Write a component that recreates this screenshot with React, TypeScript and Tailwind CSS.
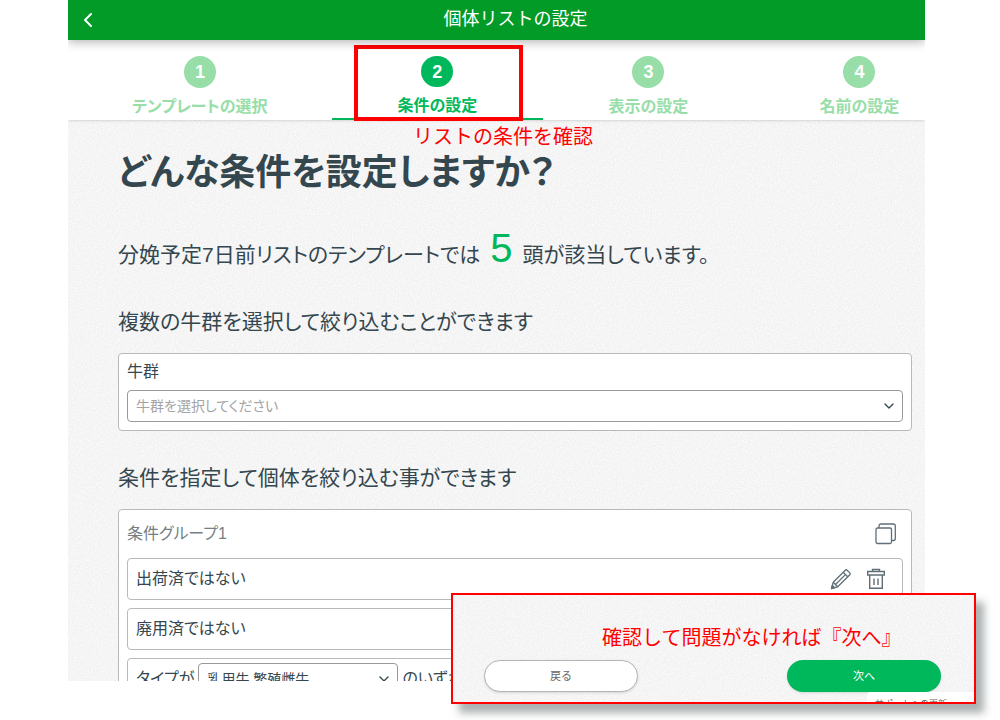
import { ChevronDown, ChevronLeft } from "lucide-react";

const STEPS = [
  { id: 1, label: "テンプレートの選択" },
  { id: 2, label: "条件の設定" },
  { id: 3, label: "表示の設定" },
  { id: 4, label: "名前の設定" },
];

const CURRENT_STEP = 2;

function PaperTexture() {
  return (
    <svg aria-hidden="true" className="absolute inset-0 h-full w-full">
      <filter id="paper">
        <feTurbulence type="fractalNoise" baseFrequency="0.7" numOctaves="2" seed="3" />
        <feColorMatrix values="0 0 0 0 1  0 0 0 0 1  0 0 0 0 1  1.8 0 0 0 -0.7" />
      </filter>
      <rect width="100%" height="100%" filter="url(#paper)" />
    </svg>
  );
}

function CopyIcon() {
  return (
    <svg width="22" height="22" viewBox="0 0 22 22" fill="none" stroke="#5f6f77" strokeWidth="1.3">
      <rect x="1" y="5" width="15.5" height="15.5" rx="1.5" />
      <path d="M4 5V3C4 1.800 4.800 1 6 1H18.300C19.500 1 20.300 1.800 20.300 3V15.500C20.300 16.700 19.500 17.500 18.300 17.500H16.500" />
    </svg>
  );
}

function PencilIcon() {
  return (
    <svg width="22" height="22" viewBox="0 0 22 22" fill="none" stroke="#5f6f77" strokeWidth="1.3" strokeLinejoin="round">
      <path d="M1.500 20.500L3.200 14.300L15.300 2.200C15.900 1.600 16.500 1.600 17.100 2.200L19.800 4.900C20.400 5.500 20.400 6.100 19.800 6.700L7.700 18.800Z" />
      <path d="M13.200 4.300L17.700 8.800M3.200 14.300L7.700 18.800M5.500 16.500L15.400 6.600" />
      <path d="M1.500 20.500L2.300 17.500L4.500 19.700Z" fill="#5f6f77" />
    </svg>
  );
}

function TrashIcon() {
  return (
    <svg width="20" height="22" viewBox="0 0 20 22" fill="none" stroke="#5f6f77" strokeWidth="1.4">
      <path d="M6.500 3.500V1.500H13.500V3.500" />
      <path d="M1.700 3.500H18.300V7H1.700Z" />
      <path d="M3.700 7V20.300H16.300V7M8 10.500V17M12 10.500V17" />
    </svg>
  );
}

function Stepper() {
  return (
    <nav aria-label="設定の手順" className="relative shrink-0 overflow-hidden bg-white shadow-sm">
      <ol className="-mr-10 grid grid-cols-[5fr_4fr_4fr_4fr]">
        {STEPS.map(({ id, label }) => {
          const active = id === CURRENT_STEP;
          return (
            <li
              key={id}
              aria-current={active ? "step" : undefined}
              className={
                active
                  ? "flex h-20 flex-col items-center border-b-2 border-[#00b85c] pt-4 text-[#00b85c]"
                  : "flex h-20 flex-col items-center pt-4 text-[#97dea8]"
              }
            >
              <span
                className={
                  active
                    ? "flex size-8 items-center justify-center rounded-full bg-[#00b85c] text-lg font-bold text-white"
                    : "flex size-8 items-center justify-center rounded-full bg-[#97dea8] text-lg font-bold text-white"
                }
              >
                {id}
              </span>
              <span className="mt-[7px] text-base font-bold">{label}</span>
            </li>
          );
        })}
      </ol>
    </nav>
  );
}

function HerdFilter() {
  return (
    <section className="mt-[15px] rounded border border-[#b9b9b9] bg-white px-2 pt-1.5 pb-2">
      <label htmlFor="herd" className="block text-base leading-6">
        牛群
      </label>
      <div className="relative mt-1.5">
        <select
          id="herd"
          defaultValue=""
          className="block h-8 w-full appearance-none rounded border border-[#999] bg-white px-2 text-sm text-[#a3a3a3]"
        >
          <option value="">牛群を選択してください</option>
        </select>
        <ChevronDown className="pointer-events-none absolute top-2 right-1.5 size-4" />
      </div>
    </section>
  );
}

function ConditionGroup() {
  return (
    <section className="mt-[15px] rounded border border-[#b9b9b9] bg-white px-2 pb-2">
      <div className="flex h-12 items-center justify-between pr-1.5">
        <h3 className="text-base text-[#757f84]">条件グループ1</h3>
        <button type="button" aria-label="条件グループを複製">
          <CopyIcon />
        </button>
      </div>
      <div className="flex flex-col gap-2">
        <div className="flex h-[42px] items-center justify-between rounded border border-[#b9b9b9] pr-4 pl-2">
          <p className="text-base">出荷済ではない</p>
          <div className="flex gap-3.5">
            <button type="button" aria-label="条件を編集">
              <PencilIcon />
            </button>
            <button type="button" aria-label="条件を削除">
              <TrashIcon />
            </button>
          </div>
        </div>
        <div className="flex h-[42px] items-center rounded border border-[#b9b9b9] px-2">
          <p className="text-base">廃用済ではない</p>
        </div>
        <div className="flex h-[42px] items-center gap-1 rounded border border-[#b9b9b9] px-2">
          <label htmlFor="cattle-type" className="text-base">
            タイプが
          </label>
          <div className="relative w-[200px]">
            <select
              id="cattle-type"
              className="block h-8 w-full appearance-none rounded border border-[#999] bg-white px-2 text-sm"
            >
              <option>乳用牛 繁殖雌牛</option>
            </select>
            <ChevronDown className="pointer-events-none absolute top-2 right-1.5 size-4" />
          </div>
          <span className="text-base">のいずれか</span>
        </div>
      </div>
    </section>
  );
}

function FooterCallout() {
  return (
    <aside className="absolute right-6 bottom-4 h-[111px] w-[525px] border-2 border-[#f00] bg-[#f2f2f2] shadow-[8px_9px_8px_rgba(70,80,80,0.45)]">
      <div className="relative h-full overflow-hidden">
        <PaperTexture />
        <div className="relative pt-[29px] pr-[33px] pl-[31px]">
          <p className="pl-[118px] text-xl leading-7 text-[#f00]">確認して問題がなければ『次へ』</p>
          <div className="mt-2 flex justify-between">
            <button
              type="button"
              className="h-8 w-[154px] rounded-full border border-[#b5b5b5] bg-white text-[11px] text-[#666] shadow"
            >
              戻る
            </button>
            <button type="button" className="h-8 w-[154px] rounded-full bg-[#00b85c] text-[11px] text-white shadow">
              次へ
            </button>
          </div>
        </div>
        <div className="absolute right-0 bottom-0 h-2.5 w-[107px] overflow-hidden rounded-tl-sm bg-white pt-1.5 pl-2 text-[9px] text-[#666]">
          サポートへの更新
        </div>
      </div>
    </aside>
  );
}

export default function App() {
  return (
    <div
      lang="ja"
      className="relative h-screen min-h-[600px] overflow-hidden bg-white pr-[75px] pb-[39px] pl-[68px] font-['Liberation_Sans','Noto_Sans_CJK_JP',sans-serif] text-[#34474f]"
    >
      <div className="relative flex h-full flex-col overflow-hidden bg-[#f2f2f2]">
        <PaperTexture />
        <header className="relative z-10 flex h-10 shrink-0 items-center bg-[#039b28] px-2 text-white shadow-[0_2px_10px_rgba(0,0,0,0.3)]">
          <button type="button" aria-label="戻る">
            <ChevronLeft className="size-6" />
          </button>
          <h1 className="flex-1 pb-0.5 pl-3.5 text-center text-lg leading-6">個体リストの設定</h1>
        </header>
        <div className="flex min-h-0 flex-1 flex-col [font-feature-settings:'palt']">
          <Stepper />
          <main className="relative min-h-0 flex-1 overflow-hidden pt-[26px] pr-[13px] pl-[50px]">
            <h2 className="text-4xl leading-[54px] font-bold">どんな条件を設定しますか？</h2>
            <p className="mt-[18px] flex items-baseline gap-2.5 text-[21px] leading-[60px]">
              分娩予定7日前リストのテンプレートでは
              <strong className="text-[40px] font-normal text-[#00b85c]">5</strong>
              頭が該当しています。
            </p>
            <h3 className="mt-[21px] text-[21px] leading-8">複数の牛群を選択して絞り込むことができます</h3>
            <HerdFilter />
            <h3 className="mt-[31px] text-[21px] leading-8">条件を指定して個体を絞り込む事ができます</h3>
            <ConditionGroup />
          </main>
        </div>
      </div>

      <div className="absolute top-[45px] left-[354px] h-[76px] w-[169px] border-4 border-[#f00]" />
      <p className="absolute top-[123px] left-[413px] text-xl leading-7 text-[#f00]">リストの条件を確認</p>
      <FooterCallout />
    </div>
  );
}
